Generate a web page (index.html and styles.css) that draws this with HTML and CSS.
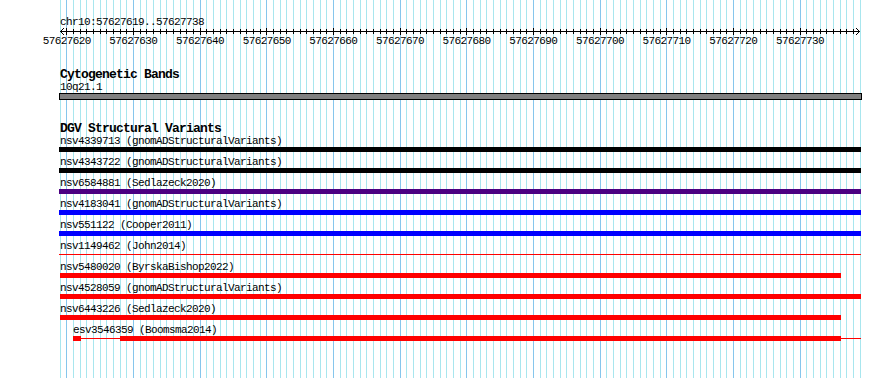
FILE: index.html
```html
<!DOCTYPE html>
<html lang="en">
<head>
  <meta charset="UTF-8">
  <title>chr10:57627619..57627738</title>
  <link rel="stylesheet" href="styles.css">
</head>
<body>
  <div class="panel">
    <!-- grid lines, one per base -->
    <svg class="grid" id="grid" width="890" height="378"></svg>

    <div class="content">
      <div class="ruler">
        <div class="ruler-title">chr10:57627619..57627738</div>
        <svg class="axis" id="axis" width="802" height="7"></svg>
        <div class="ticks">
          <span>57627620</span>
          <span>57627630</span>
          <span>57627640</span>
          <span>57627650</span>
          <span>57627660</span>
          <span>57627670</span>
          <span>57627680</span>
          <span>57627690</span>
          <span>57627700</span>
          <span>57627710</span>
          <span>57627720</span>
          <span>57627730</span>
        </div>
      </div>

      <div class="track track-bands">
        <div class="track-title">Cytogenetic Bands</div>
        <div class="label">10q21.1</div>
        <div class="band"></div>
      </div>

      <div class="track track-dgv">
        <div class="track-title">DGV Structural Variants</div>

        <div class="feature">
          <div class="label">nsv4339713 (gnomADStructuralVariants)</div>
          <div class="glyph"><span class="seg black" style="margin-left: -1px; width: 802px"></span></div>
        </div>
        <div class="feature">
          <div class="label">nsv4343722 (gnomADStructuralVariants)</div>
          <div class="glyph"><span class="seg black" style="margin-left: -1px; width: 802px"></span></div>
        </div>
        <div class="feature">
          <div class="label">nsv6584881 (Sedlazeck2020)</div>
          <div class="glyph"><span class="seg purple" style="margin-left: -1px; width: 802px"></span></div>
        </div>
        <div class="feature">
          <div class="label">nsv4183041 (gnomADStructuralVariants)</div>
          <div class="glyph"><span class="seg blue" style="margin-left: -1px; width: 802px"></span></div>
        </div>
        <div class="feature">
          <div class="label">nsv551122 (Cooper2011)</div>
          <div class="glyph"><span class="seg blue" style="margin-left: -1px; width: 802px"></span></div>
        </div>
        <div class="feature">
          <div class="label">nsv1149462 (John2014)</div>
          <div class="glyph"><span class="seg red thin" style="margin-left: -1px; width: 802px"></span></div>
        </div>
        <div class="feature">
          <div class="label">nsv5480020 (ByrskaBishop2022)</div>
          <div class="glyph"><span class="seg red" style="width: 781px"></span></div>
        </div>
        <div class="feature">
          <div class="label">nsv4528059 (gnomADStructuralVariants)</div>
          <div class="glyph"><span class="seg red" style="width: 801px"></span></div>
        </div>
        <div class="feature">
          <div class="label">nsv6443226 (Sedlazeck2020)</div>
          <div class="glyph"><span class="seg red" style="width: 781px"></span></div>
        </div>
        <div class="feature">
          <div class="label" style="margin-left: 13px">esv3546359 (Boomsma2014)</div>
          <div class="glyph">
            <span class="seg red" style="margin-left: 13px; width: 8px"></span>
            <span class="seg red thin" style="width: 39px"></span>
            <span class="seg red" style="width: 721px"></span>
            <span class="seg red thin" style="width: 20px"></span>
          </div>
        </div>
      </div>
    </div>
  </div>

  <script>
    // 120 bp over 800 px, view starts at 57627619
    const START = 57627619;
    const BASES = 120;
    const LEFT = 60;
    const NS = 'http://www.w3.org/2000/svg';

    function xAt(k) {
      return Math.floor(LEFT + (k * 800) / BASES);
    }

    function add(parent, tag, attrs) {
      const el = document.createElementNS(NS, tag);
      for (const name in attrs) el.setAttribute(name, attrs[name]);
      parent.appendChild(el);
      return el;
    }

    const grid = document.getElementById('grid');
    for (let k = 0; k <= BASES; k++) {
      const major = (START + k) % 10 === 0;
      add(grid, 'rect', {
        x: xAt(k), y: 0, width: 1, height: 378,
        class: major ? 'major' : 'minor'
      });
    }

    const axis = document.getElementById('axis');
    add(axis, 'line', { x1: 0, y1: 3.5, x2: 800, y2: 3.5, class: 'axis-line' });
    for (let k = 1; k < BASES; k++) {
      const x = xAt(k) - LEFT + 0.5;
      const major = (START + k) % 10 === 0;
      add(axis, 'line', {
        x1: x, y1: major ? 0 : 1, x2: x, y2: major ? 7 : 6,
        class: 'axis-line'
      });
    }
    add(axis, 'polyline', { points: '4,0 0.5,3.5 4,7', class: 'arrow' });
    add(axis, 'polyline', { points: '796,0 799.5,3.5 796,7', class: 'arrow' });
  </script>
</body>
</html>
```

FILE: styles.css
```css
body {
  margin: 0;
  background: white;
  font-family: 'Liberation Mono', 'DejaVu Sans Mono', monospace;
  color: black;
}

.panel {
  position: relative;
  width: 890px;
  height: 378px;
  overflow: hidden;
}

.grid {
  position: absolute;
  top: 0;
  left: 0;
}

.grid .minor {
  fill: #a8e6ee;
}

.grid .major {
  fill: #86c6ec;
}

.content {
  position: relative;
  padding-left: 60px;
}

.ruler-title,
.label,
.ticks span {
  font-size: 11px;
  letter-spacing: -0.6px;
  line-height: 12px;
  height: 12px;
  white-space: nowrap;
}

.ruler-title {
  padding-top: 16px;
}

.axis {
  display: block;
  overflow: visible;
}

.axis-line {
  stroke: black;
  stroke-width: 1;
  shape-rendering: crispEdges;
}

.arrow {
  fill: none;
  stroke: black;
  stroke-width: 1;
}

.ticks {
  display: grid;
  grid-template-columns: repeat(12, 66.667px);
  margin-left: -26.667px;
  height: 12px;
}

.ticks span {
  text-align: center;
}

.track-title {
  font-size: 13px;
  font-weight: bold;
  letter-spacing: -0.8px;
  line-height: 13px;
  height: 13px;
  white-space: nowrap;
}

.track-bands {
  margin-top: 21px;
}

.track-dgv {
  margin-top: 22px;
}

.band {
  margin-left: -1px;
  width: 801px;
  height: 5px;
  background: #808080;
  border: 1px solid black;
}

.glyph {
  display: flex;
  align-items: center;
  height: 5px;
  margin-bottom: 4px;
}

.seg {
  flex: none;
  height: 5px;
}

.seg.thin {
  height: 1px;
}

.black {
  background: black;
}

.purple {
  background: #4b0082;
}

.blue {
  background: #0000ff;
}

.red {
  background: #ff0000;
}
```
